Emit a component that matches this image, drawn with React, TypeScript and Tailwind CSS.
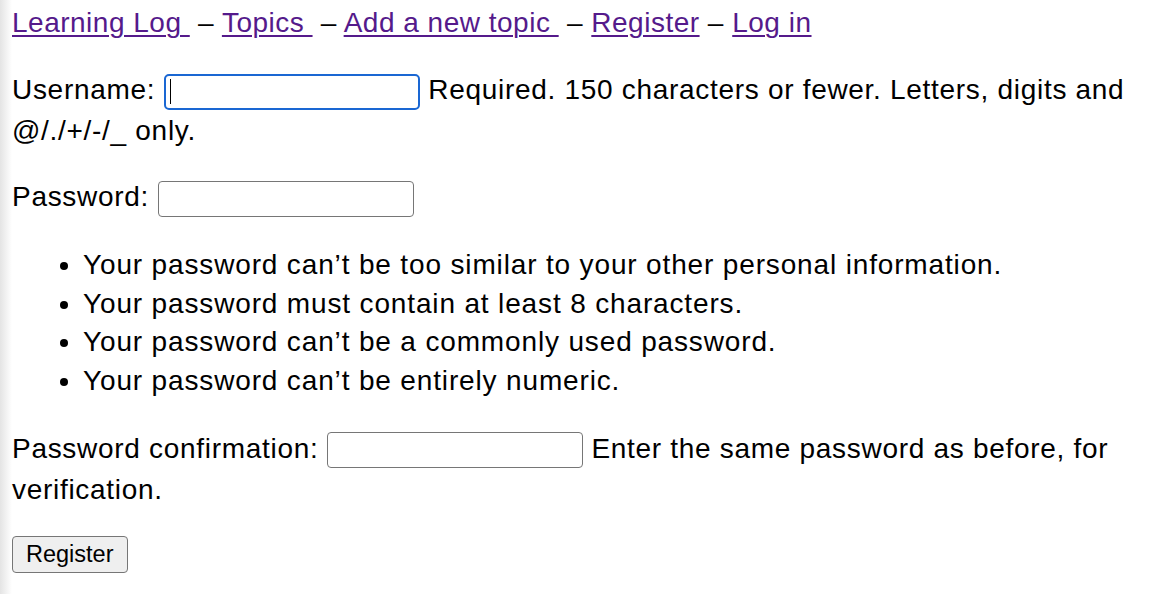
const linkCls = "text-[#551a8b] underline underline-offset-[3px] decoration-[1.5px]";
const inputCls =
  "inline-block w-[256px] h-[36px] border border-[#767676] rounded-[4px] bg-white align-middle";

const rules = [
  "Your password can’t be too similar to your other personal information.",
  "Your password must contain at least 8 characters.",
  "Your password can’t be a commonly used password.",
  "Your password can’t be entirely numeric.",
];

export default function App() {
  return (
    <div className="min-h-[594px] bg-[linear-gradient(to_right,#e4e4e4,#ffffff_12px)] pl-[12px] pr-[14px] pt-[3px] text-black text-[28px] leading-[39px] tracking-[0.7px] font-['Liberation_Sans',Arial,sans-serif]">
      <p className="tracking-[0.5px]">
        <a href="#" className={linkCls}>{"Learning Log "}</a>
        {"\u00a0– "}
        <a href="#" className={linkCls}>{"Topics "}</a>
        {"\u00a0– "}
        <a href="#" className={linkCls}>{"Add a new topic "}</a>
        {"\u00a0– "}
        <a href="#" className={linkCls}>Register</a>
        {" – "}
        <a href="#" className={linkCls}>Log in</a>
      </p>

      <form>
        <p className="mt-[27px] leading-[41px]">
          <label>Username:</label>{" "}
          <span className="relative inline-block align-middle">
            <input
              type="text"
              className="block w-[256px] h-[36px] border-2 border-[#1a67d3] rounded-[5px] bg-white outline-none"
            />
            <span className="absolute left-[6px] top-[5px] w-[1px] h-[25px] bg-black" />
          </span>{" "}
          <span>Required. 150 characters or fewer. Letters, digits and @/./+/-/_ only.</span>
        </p>

        <p className="mt-[25px] leading-[41px]">
          <label>Password:</label> <input type="password" className={inputCls} />
        </p>

        <ul className="mt-[29px] list-disc pl-[71px] leading-[38.7px] tracking-[0.85px]">
          {rules.map((r) => (
            <li key={r}>{r}</li>
          ))}
        </ul>

        <p className="mt-[27px] leading-[41px]">
          <label>Password confirmation:</label> <input type="password" className={inputCls} />{" "}
          <span>Enter the same password as before, for verification.</span>
        </p>

        <button
          type="submit"
          className="mt-[26px] h-[37px] px-[13px] bg-[#efefef] border border-[#767676] rounded-[4px] text-[23.5px] leading-none tracking-normal"
        >
          Register
        </button>
      </form>
    </div>
  );
}
